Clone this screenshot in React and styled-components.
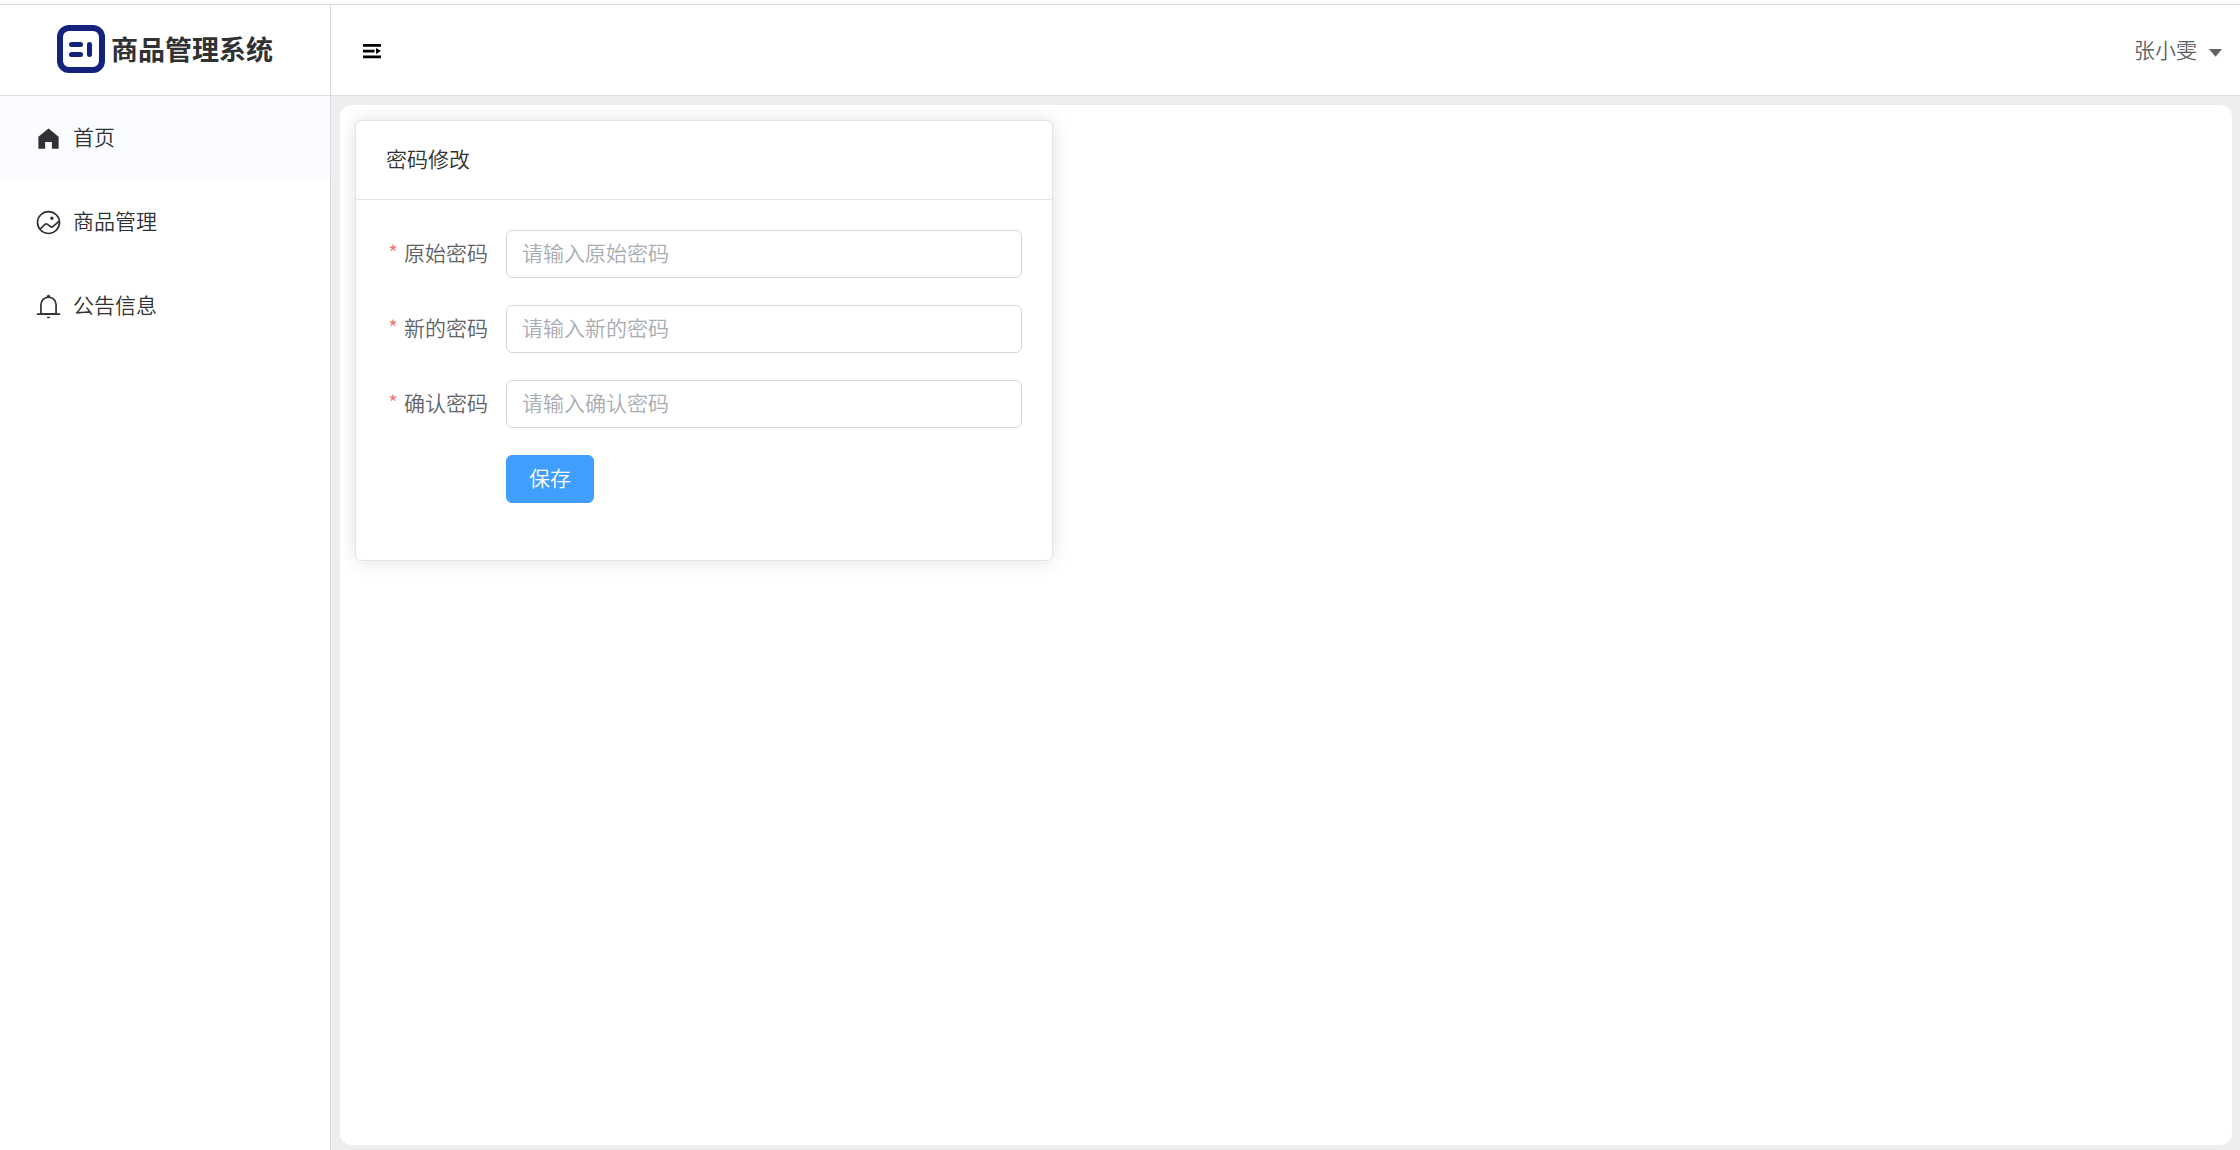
import React, { useState } from "react";
import styled, { createGlobalStyle } from "styled-components";

// --- Data ---
const menuItems = [
  { key: "home", label: "首页", icon: "home" },
  { key: "goods", label: "商品管理", icon: "picture" },
  { key: "notice", label: "公告信息", icon: "bell" },
];

const passwordFields = [
  { name: "password", label: "原始密码", placeholder: "请输入原始密码" },
  { name: "newPassword", label: "新的密码", placeholder: "请输入新的密码" },
  { name: "confirmPassword", label: "确认密码", placeholder: "请输入确认密码" },
];

const iconPaths = {
  home: ["M512 128 128 447.936V896h255.936V640H640v256h255.936V447.936z"],
  picture: [
    "M512 128a384 384 0 1 0 0 768 384 384 0 0 0 0-768m0-64a448 448 0 1 1 0 896 448 448 0 0 1 0-896",
    "M640 288q64 0 64 64t-64 64q-64 0-64-64t64-64M214.656 790.656l-45.312-45.312 185.664-185.6a96 96 0 0 1 123.712-10.24l138.24 98.688a32 32 0 0 0 39.872-2.176L906.688 422.4l42.624 47.744L699.52 693.696a96 96 0 0 1-119.808 6.592l-138.24-98.752a32 32 0 0 0-41.152 3.456l-185.664 185.6z",
  ],
  bell: [
    "M512 64a64 64 0 0 1 64 64v64H448v-64a64 64 0 0 1 64-64",
    "M256 768h512V448a256 256 0 1 0-512 0zm256-640a320 320 0 0 1 320 320v384H192V448a320 320 0 0 1 320-320",
    "M96 768h832q32 0 32 32t-32 32H96q-32 0-32-32t32-32m352 128h128a64 64 0 0 1-128 0",
  ],
  caret: ["m192 384 320 384 320-384z"],
};

// --- Styled Components ---
const GlobalStyle = createGlobalStyle`
  * {
    box-sizing: border-box;
  }

  body {
    margin: 0;
    background-color: #fff;
    color: #303133;
    font-family: "Liberation Sans", "Noto Sans CJK SC", sans-serif;
    font-size: 21px;
    font-weight: 350;
    line-height: 30px;
  }

  button,
  input {
    font: inherit;
  }
`;

const Layout = styled.div`
  display: flex;
  min-height: 100vh;
  padding-top: 4px;
`;

const Sidebar = styled.aside`
  flex: 0 0 331px;
  border-top: 1px solid #dcdcdc;
  border-right: 1px solid #d8dadd;
`;

const Brand = styled.div`
  display: flex;
  align-items: center;
  justify-content: center;
  gap: 6px;
  height: 91px;
  padding-bottom: 2px;
  border-bottom: 1px solid #e0e0e0;
`;

const BrandName = styled.h1`
  margin: 0;
  font-family: "Noto Sans CJK SC", sans-serif;
  font-size: 27px;
  font-weight: 700;
  line-height: 36px;
`;

const MenuItem = styled.a`
  display: flex;
  align-items: center;
  gap: 11px;
  height: 84px;
  padding: 0 35px;
  color: #303133;
  text-decoration: none;
  background-color: ${(props) => (props.$active ? "#fafcff" : "transparent")};

  &:hover {
    background-color: #fafcff;
  }
`;

const Page = styled.div`
  flex: 1;
  display: flex;
  flex-direction: column;
  min-width: 0;
`;

const Header = styled.header`
  display: flex;
  align-items: center;
  justify-content: space-between;
  height: 92px;
  padding: 2px 14px 0 30px;
  border-top: 1px solid #dcdcdc;
  border-bottom: 1px solid #e0e0e0;
`;

const PlainButton = styled.button`
  display: flex;
  align-items: center;
  gap: 8px;
  padding: 0;
  border: none;
  background: none;
  color: ${(props) => props.$color};
  cursor: pointer;
`;

const Main = styled.main`
  flex: 1;
  display: flex;
  padding: 9px 8px 5px 9px;
  background-color: #eee;
`;

const Panel = styled.section`
  flex: 1;
  padding: 15px;
  border-radius: 12px;
  background-color: #fff;
`;

const Card = styled.div`
  width: 37.5%;
  border: 1px solid #e2e3e5;
  border-radius: 6px;
  background-color: #fff;
  box-shadow: 0 0 18px rgba(0, 0, 0, 0.12);
`;

const CardTitle = styled.h2`
  margin: 0;
  padding: 24px 30px;
  border-bottom: 1px solid #e2e3e5;
  font-size: 21px;
  font-weight: 350;
`;

const Form = styled.form`
  padding: 30px 30px 57px;
`;

const FormRow = styled.div`
  display: flex;
  height: 48px;
  margin-bottom: 27px;
`;

const Label = styled.label`
  flex: 0 0 120px;
  padding-right: 18px;
  color: #606266;
  line-height: 48px;
  text-align: right;

  &::before {
    content: "*";
    margin-right: 6px;
    color: #f56c6c;
    font-family: "Noto Sans CJK SC", sans-serif;
    line-height: 30px;
  }
`;

const Input = styled.input`
  flex: 1;
  min-width: 0;
  height: 48px;
  padding: 0 15px;
  border: 1px solid #d4d6da;
  border-radius: 6px;
  outline: none;
  color: #606266;

  &::placeholder {
    color: #a8abb2;
    opacity: 1;
  }

  &:focus {
    border-color: #409eff;
  }
`;

const SaveButton = styled.button`
  height: 48px;
  margin-left: 120px;
  padding: 0 22px;
  border: 1px solid #409eff;
  border-radius: 6px;
  background-color: #409eff;
  color: #fff;
  cursor: pointer;
`;

// --- Icons ---
function Icon({ name, size }) {
  return (
    <svg width={size} height={size} viewBox="0 0 1024 1024" fill="currentColor">
      {iconPaths[name].map((d) => (
        <path key={d} d={d} />
      ))}
    </svg>
  );
}

function Logo() {
  return (
    <svg width="48" height="48" viewBox="0 0 48 48">
      <rect x="3" y="3" width="42" height="42" rx="9" fill="none" stroke="#14227d" strokeWidth="6" />
      <rect x="12" y="17" width="14" height="5" rx="2.5" fill="#14227d" />
      <rect x="12" y="27" width="14" height="5" rx="2.5" fill="#14227d" />
      <rect x="30" y="17" width="5" height="15" rx="2.5" fill="#14227d" />
    </svg>
  );
}

function FoldIcon() {
  return (
    <svg width="24" height="24" viewBox="0 0 24 24" fill="currentColor">
      <path d="M2 5h18v2.7H2zM2 10.7h11.5v2.7H2zM2 16.5h18v2.7H2zM15 9l5 3-5 3z" />
    </svg>
  );
}

// --- Component ---
export default function App() {
  const [active, setActive] = useState("home");

  return (
    <>
      <GlobalStyle />
      <Layout>
        <Sidebar>
          <Brand>
            <Logo />
            <BrandName>商品管理系统</BrandName>
          </Brand>
          <nav>
            {menuItems.map((item) => (
              <MenuItem
                key={item.key}
                href={`#${item.key}`}
                $active={item.key === active}
                onClick={() => setActive(item.key)}
              >
                <Icon name={item.icon} size={27} />
                {item.label}
              </MenuItem>
            ))}
          </nav>
        </Sidebar>

        <Page>
          <Header>
            <PlainButton type="button" $color="#000" aria-label="折叠菜单">
              <FoldIcon />
            </PlainButton>
            <PlainButton type="button" $color="#606266">
              张小雯
              <Icon name="caret" size={21} />
            </PlainButton>
          </Header>

          <Main>
            <Panel>
              <Card>
                <CardTitle>密码修改</CardTitle>
                <Form onSubmit={(e) => e.preventDefault()}>
                  {passwordFields.map((field) => (
                    <FormRow key={field.name}>
                      <Label htmlFor={field.name}>{field.label}</Label>
                      <Input
                        id={field.name}
                        name={field.name}
                        type="password"
                        placeholder={field.placeholder}
                      />
                    </FormRow>
                  ))}
                  <SaveButton type="submit">保存</SaveButton>
                </Form>
              </Card>
            </Panel>
          </Main>
        </Page>
      </Layout>
    </>
  );
}
